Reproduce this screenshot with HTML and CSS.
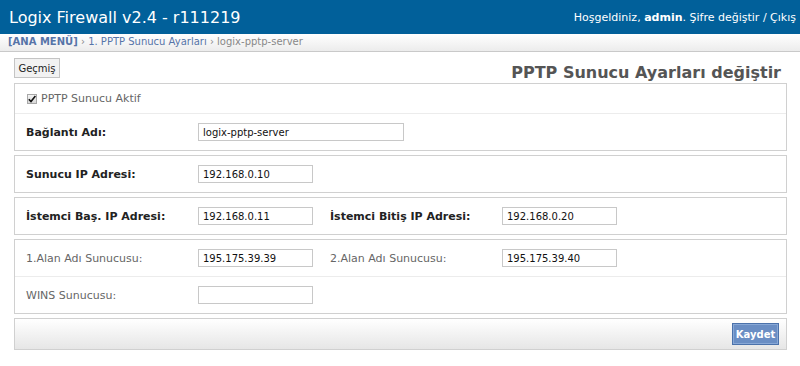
FILE: index.html
```html
<!doctype html>
<html lang="tr">
<head>
	<meta charset="UTF-8">
	<title>PPTP Sunucu Ayarları</title>
	<link rel="stylesheet" href="styles.css">
</head>
<body>
	<div class="topbar">
		<div class="brand">Logix Firewall v2.4 - r111219</div>
		<div class="user">Hoşgeldiniz, <b>admin</b>. <a href="javascript:;">Şifre değiştir</a> / <a href="javascript:;">Çıkış</a></div>
	</div>
	<div class="crumbs">
		<a href="javascript:;" class="home">[ANA MENÜ]</a>
		<span class="sep">›</span>
		<a href="javascript:;">1. PPTP Sunucu Ayarları</a>
		<span class="sep">›</span>
		<span class="cur">logix-pptp-server</span>
	</div>
	<div class="content">
		<div class="toolbar">
			<button class="btn">Geçmiş</button>
			<h1 class="title">PPTP Sunucu Ayarları değiştir</h1>
		</div>
		<form>
			<div class="panel">
				<div class="row row-check">
					<label class="check">
						<input type="checkbox" checked>
						<span class="box"><svg width="8" height="8" viewBox="0 0 8 8"><path d="M0.8 4.2 L3 6.6 L7.4 1" fill="none" stroke="#111" stroke-width="1.6"/></svg></span>
						PPTP Sunucu Aktif
					</label>
				</div>
				<div class="row">
					<label class="lbl strong">Bağlantı Adı:</label>
					<input type="text" class="txt wide" value="logix-pptp-server">
				</div>
			</div>
			<div class="panel">
				<div class="row">
					<label class="lbl strong">Sunucu IP Adresi:</label>
					<input type="text" class="txt" value="192.168.0.10">
				</div>
			</div>
			<div class="panel">
				<div class="row">
					<label class="lbl strong">İstemci Baş. IP Adresi:</label>
					<input type="text" class="txt" value="192.168.0.11">
					<label class="lbl strong">İstemci Bitiş IP Adresi:</label>
					<input type="text" class="txt" value="192.168.0.20">
				</div>
			</div>
			<div class="panel">
				<div class="row">
					<label class="lbl">1.Alan Adı Sunucusu:</label>
					<input type="text" class="txt" value="195.175.39.39">
					<label class="lbl">2.Alan Adı Sunucusu:</label>
					<input type="text" class="txt" value="195.175.39.40">
				</div>
				<div class="row">
					<label class="lbl">WINS Sunucusu:</label>
					<input type="text" class="txt" value="">
				</div>
			</div>
			<div class="panel actions">
				<button type="button" class="btn-save">Kaydet</button>
			</div>
		</form>
	</div>
</body>
</html>
```

FILE: styles.css
```css
*{margin: 0;padding: 0;box-sizing: border-box;}
body{font-family: "DejaVu Sans", Verdana, sans-serif; font-size: 11px; color: #333; background: #fff;}
a{text-decoration: none;}

.topbar{height: 34px; background: #01609a; color: #fff; display: flex; justify-content: space-between; align-items: center; padding: 0 4px 0 9px;}
.topbar .brand{font-size: 16px;}
.topbar .user{font-size: 11px;}
.topbar .user a{color: #fff;}

.crumbs{height: 18px; border-bottom: 1px solid #c9c9c9; background: linear-gradient(#fff, #ececec); padding: 2px 8px 0; font-size: 10px; color: #888;}
.crumbs a{color: #5674a8;}
.crumbs .home{font-weight: bold;}
.crumbs .cur{color: #888;}

.content{padding: 6px 13px 0 14px;}
.toolbar{display: flex; justify-content: space-between; align-items: flex-end; height: 24px;}
.btn{font-family: inherit; font-size: 10px; color: #222; background: #f2f2f2; border: 1px solid #c4c4c4; height: 20px; width: 46px; align-self: flex-start;}
.title{font-size: 16px; color: #555; padding-right: 6px; line-height: 19px;}

form{margin-top: 1px;}
.panel{border: 1px solid #d0d0d0; margin-bottom: 4px;}
.row{display: flex; align-items: center; height: 36px; padding-left: 11px;}
.row + .row{height: 37px; border-top: 1px solid #ececec;}
.row-check{height: 29px;}
.check{color: #666; font-size: 11px; display: flex; align-items: center;}
.check input{display: none;}
.check .box{width: 10px; height: 10px; margin: 1px 4px 0 1px; border: 1px solid #a8a8a8; background: linear-gradient(#f4f4f4, #d8d8d8); display: flex; align-items: center; justify-content: center;}

.lbl{width: 172px; color: #666; font-size: 11px;}
.lbl.strong{font-weight: bold; color: #222;}
.txt{width: 115px; height: 18px; border: 1px solid #c8c8c8; font-family: inherit; font-size: 10px; color: #111; padding: 0 4px; margin-right: 17px;}
.txt.wide{width: 206px;}

.actions{height: 32px; display: flex; justify-content: flex-end; align-items: center; padding-right: 7px; background: linear-gradient(#fff, #e6e6e6);}
.btn-save{font-family: inherit; font-size: 10px; font-weight: bold; color: #fff; background: #6a8ec4; border: 1px solid #4b72ab; box-shadow: inset 0 0 0 1px #88a8d6; width: 47px; height: 22px;}
```
